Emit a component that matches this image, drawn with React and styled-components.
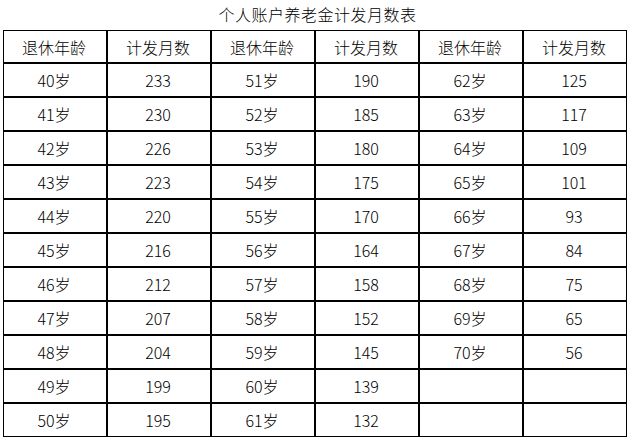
import styled, { createGlobalStyle } from "styled-components";

const GlobalStyle = createGlobalStyle`
  html, body {
    margin: 0;
    padding: 0;
    background: #ffffff;
  }
  body {
    font-family: "Noto Sans CJK SC", "Liberation Sans", sans-serif;
    font-weight: 300;
    color: #000000;
  }
`;

const left = Array.from({ length: 11 }, (_, i) => [`${40 + i}岁`, [233, 230, 226, 223, 220, 216, 212, 207, 204, 199, 195][i]]);
const middle = Array.from({ length: 11 }, (_, i) => [`${51 + i}岁`, [190, 185, 180, 175, 170, 164, 158, 152, 145, 139, 132][i]]);
const right = Array.from({ length: 9 }, (_, i) => [`${62 + i}岁`, [125, 117, 109, 101, 93, 84, 75, 65, 56][i]]);

const rows = left.map((pair, i) => [
  ...pair,
  ...middle[i],
  ...(right[i] || ["", ""]),
]);

export default function App() {
  return (
    <Page>
      <GlobalStyle />
      <Titulo>个人账户养老金计发月数表</Titulo>
      <Tabla>
        {["退休年龄", "计发月数", "退休年龄", "计发月数", "退休年龄", "计发月数"].map((h, i) => (
          <Celda key={"h" + i} $header>
            {h}
          </Celda>
        ))}
        {rows.map((row, r) =>
          row.map((v, c) => <Celda key={r + "-" + c}>{v}</Celda>)
        )}
      </Tabla>
    </Page>
  );
}

const Page = styled.div`
  width: 630px;
  height: 442px;
  padding-left: 3px;
  box-sizing: border-box;
  display: flex;
  flex-direction: column;
`;

const Titulo = styled.div`
  height: 30px;
  width: 624px;
  display: flex;
  align-items: center;
  justify-content: center;
  padding-left: 5px;
  box-sizing: border-box;
  padding-bottom: 2px;
  font-size: 16px;
  letter-spacing: 0.5px;
`;

const Tabla = styled.div`
  width: 624px;
  box-sizing: border-box;
  border: 1px solid #000;
  background: #000;
  display: grid;
  grid-template-columns: repeat(6, 102px);
  grid-template-rows: 31px repeat(11, 32px);
  gap: 2px;
`;

const Celda = styled.div`
  background: #ffffff;
  display: flex;
  align-items: center;
  justify-content: center;
  font-size: 16px;
  line-height: 1;
  padding-bottom: ${(p) => (p.$header ? "0" : "1px")};
  padding-right: 2px;
`;
